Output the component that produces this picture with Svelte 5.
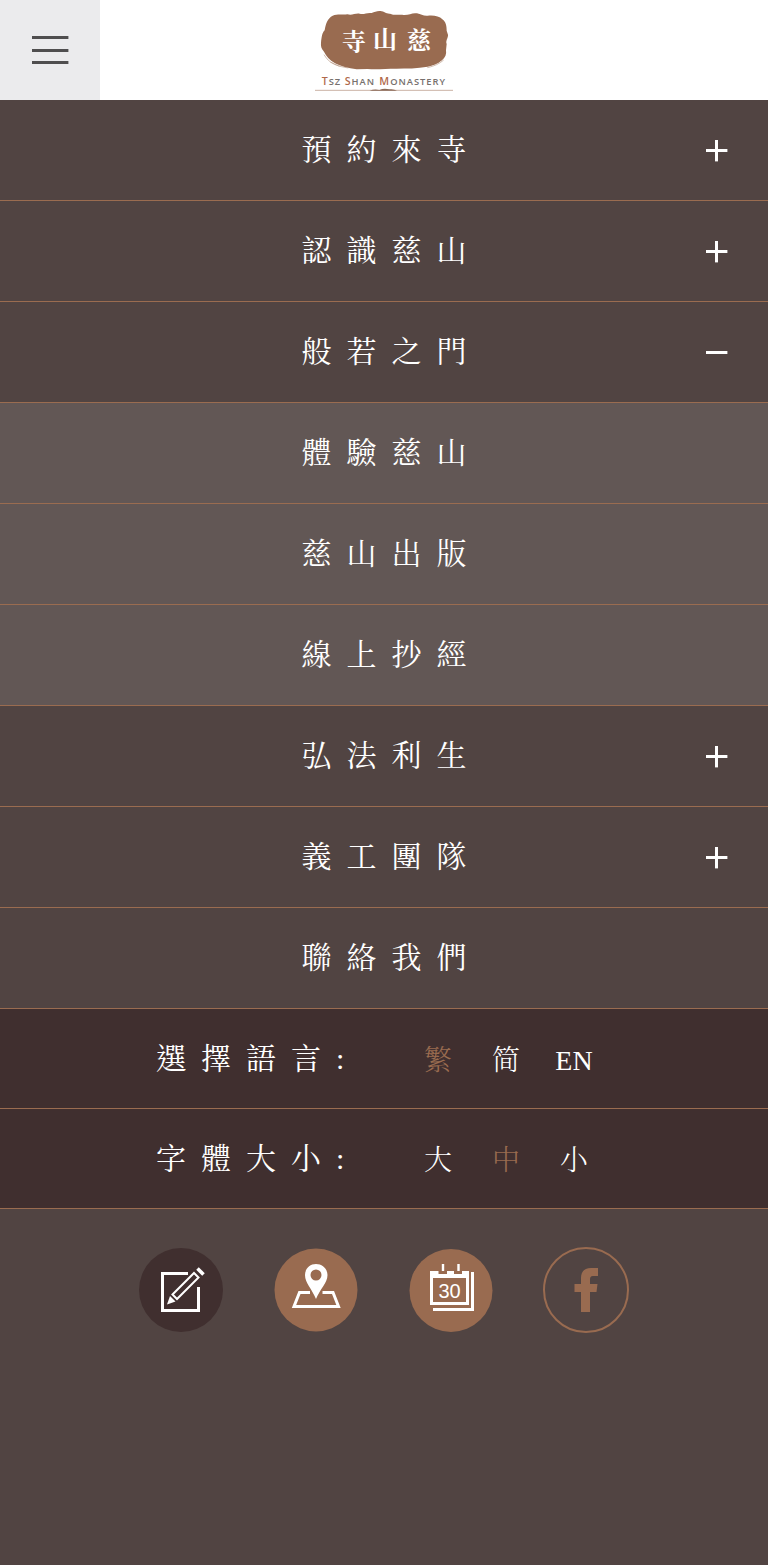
<script>
    let openId = $state("prajna");
    let lang = $state("tc");
    let size = $state("medium");

    const menu = [
        { id: "visit", title: "預約來寺", items: ["參觀預約"] },
        { id: "about", title: "認識慈山", items: ["慈山簡介"] },
        {
            id: "prajna",
            title: "般若之門",
            items: ["體驗慈山", "慈山出版", "線上抄經"],
        },
        { id: "dharma", title: "弘法利生", items: ["弘法活動"] },
        { id: "volunteer", title: "義工團隊", items: ["義工服務"] },
        { id: "contact", title: "聯絡我們", items: [] },
    ];

    const langs = [
        { id: "tc", text: "繁" },
        { id: "sc", text: "简" },
        { id: "en", text: "EN" },
    ];

    const sizes = [
        { id: "large", text: "大" },
        { id: "medium", text: "中" },
        { id: "small", text: "小" },
    ];

    function toggle(id) {
        openId = openId === id ? "" : id;
    }
</script>

<header class="top-bar">
    <button class="btn-menu" aria-label="Menu">
        <svg width="37" height="28" viewBox="0 0 37 28" aria-hidden="true">
            <path d="M0 1.5h36.4M0 14.5h36.4M0 26.5h36.4" stroke="#4f4e4f" stroke-width="3" />
        </svg>
    </button>
    <a class="logo" href="#home" aria-label="Tsz Shan Monastery">
        <svg width="138" height="84" viewBox="45 24 414 252">
            <path
                fill="#996b50"
                d="M63 128C65 112 66 98 74 91C77 72 83 54 98 47C112 41 128 45 142 43C157 47 165 39 179 41C193 44 200 37 215 39C224 36 231 32 241 33C254 34 258 42 270 41C285 48 298 42 311 45C327 46 337 37 351 40C363 43 370 48 383 47C401 45 418 48 427 58C438 66 440 79 440 92L444 104C445 114 436 121 440 132L438 151C440 162 436 173 426 181C413 192 398 197 383 200C351 206 320 205 289 206C258 206 232 209 203 207L170 208C143 205 123 199 105 190C88 180 79 168 72 155C64 146 62 138 63 128Z"
            />
            <path
                d="M72 164Q88 192 119 198M91 186Q115 202 145 204M382 203Q414 196 431 180"
                fill="none"
                stroke="#b99a87"
                stroke-width="2"
            />
            <g class="seal">
                <text x="125" y="150">寺</text>
                <text x="219" y="143">山</text>
                <text x="321" y="147">慈</text>
            </g>
            <g class="wordmark">
                <text x="65" y="255"><tspan class="cap">T</tspan>SZ</text>
                <text x="134" y="255"><tspan class="cap">S</tspan>HAN</text>
                <text x="238" y="255"><tspan class="cap">M</tspan>ONASTERY</text>
            </g>
            <path d="M45 271H459" stroke="#b08c78" stroke-width="2" />
            <path d="M209 272Q224 266 238 270Q252 263 268 268Q281 266 291 272Z" fill="#8a6a58" />
        </svg>
    </a>
</header>

<nav>
    <ul class="menu">
        {#each menu as section (section.id)}
            <li>
                <div class="row">
                    <a class="title" href="#{section.id}">{section.title}</a>
                    {#if section.items.length}
                        <button
                            class="btn-toggle"
                            aria-label={section.title}
                            aria-expanded={openId === section.id}
                            onclick={() => toggle(section.id)}
                        >
                            <svg width="22" height="24" viewBox="0 0 22 24" aria-hidden="true">
                                <path d="M0 12.5h21.4" />
                                {#if openId !== section.id}
                                    <path d="M10.5 2v21.4" />
                                {/if}
                            </svg>
                        </button>
                    {/if}
                </div>
                {#if section.items.length && openId === section.id}
                    <ul class="submenu">
                        {#each section.items as item}
                            <li class="row"><a class="title" href="#{section.id}">{item}</a></li>
                        {/each}
                    </ul>
                {/if}
            </li>
        {/each}
    </ul>
</nav>

<section class="setting">
    <span class="label">選擇語言:</span>
    {#each langs as option}
        <button class="option" class:active={lang === option.id} onclick={() => (lang = option.id)}>
            {option.text}
        </button>
    {/each}
</section>

<section class="setting">
    <span class="label">字體大小:</span>
    {#each sizes as option}
        <button class="option" class:active={size === option.id} onclick={() => (size = option.id)}>
            {option.text}
        </button>
    {/each}
</section>

<footer class="shortcuts">
    <a href="#register" aria-label="Register">
        <svg width="86" height="86" viewBox="0 0 86 86">
            <circle cx="43" cy="43" r="42" fill="#402f2f" />
            <path d="M50 26.5H24.5V63.5H60.5V40" fill="none" stroke="#fff" stroke-width="3" />
            <path d="M34.5 47.5L56 26L60.5 30.5L39 52Z" fill="none" stroke="#fff" stroke-width="2" />
            <path d="M59.5 21.5L65.5 27.5" stroke="#fff" stroke-width="3.6" />
            <path d="M32 49L37.5 54.5L29 57.5Z" fill="#fff" />
        </svg>
    </a>
    <a href="#map" aria-label="Map">
        <svg width="86" height="86" viewBox="0 0 86 86">
            <circle cx="43" cy="43" r="41.5" fill="#996b50" />
            <path d="M37 45.5H26.5L21 59.5H65.5L60 45.5H49.5" fill="none" stroke="#fff" stroke-width="3" />
            <path
                d="M43 17C36.5 17 32 22 32 28C32 36 39 42 43 52C47 42 54.5 36 54.5 28C54.5 22 49.5 17 43 17ZM43 22.5A5.5 5.5 0 1 1 43 33.5A5.5 5.5 0 1 1 43 22.5Z"
                fill="#fff"
                fill-rule="evenodd"
            />
        </svg>
    </a>
    <a href="#calendar" aria-label="Calendar">
        <svg width="86" height="86" viewBox="0 0 86 86">
            <circle cx="43" cy="43.5" r="41.5" fill="#996b50" />
            <path d="M35 17V24M50.5 17V24" stroke="#fff" stroke-width="2.4" />
            <path
                d="M22 24H30.5V27H39V24H46V27H54V24H61V58H22ZM25 31V55H58V31Z"
                fill="#fff"
                fill-rule="evenodd"
            />
            <path d="M64.5 25V62.5H25" fill="none" stroke="#fff" stroke-width="3" />
            <text class="day" x="41.5" y="51">30</text>
        </svg>
    </a>
    <a href="#facebook" aria-label="Facebook">
        <svg width="86" height="86" viewBox="0 0 86 86">
            <circle cx="43" cy="43" r="42" fill="none" stroke="#996b50" stroke-width="2" />
            <path
                d="M38 65V45H31.5V37H38V31C38 24 42 21 48 21H55V29H50C47.5 29 47 30.5 47 33V37H54.5L53.5 45H47V65Z"
                fill="#996b50"
            />
        </svg>
    </a>
</footer>

<style>
    :global(body) {
        background: #514442;
        color: #fff;
        font-family: "Liberation Serif", "Noto Serif CJK TC", "Noto Sans CJK TC", serif;
        font-weight: 300;
    }

    a {
        color: inherit;
        text-decoration: none;
    }

    button {
        background: none;
        border: 0;
        color: inherit;
        cursor: pointer;
        font: inherit;
        padding: 0;
    }

    svg {
        display: block;
    }

    ul {
        list-style: none;
        margin: 0;
        padding: 0;
    }

    .top-bar {
        background: #fff;
        display: grid;
        grid-template-columns: 100px 1fr 100px;
        height: 100px;
    }

    .btn-menu {
        align-items: center;
        background: #ebebed;
        display: flex;
        justify-content: center;
    }

    .logo {
        align-self: center;
        justify-self: center;
    }

    .seal {
        fill: #fff;
        font-family: "Noto Serif CJK TC", "Noto Sans CJK TC", serif;
        font-size: 72px;
        font-weight: 700;
    }

    .wordmark {
        fill: #77706d;
        font-family: "Open Sans", sans-serif;
        font-size: 28px;
        font-weight: 600;
        letter-spacing: 3px;
    }

    .cap {
        fill: #b0694a;
        font-size: 32px;
    }

    .row {
        align-items: center;
        border-bottom: 1px solid #9a6c50;
        display: grid;
        grid-template-columns: 102px 1fr 102px;
        height: 100px;
    }

    .submenu {
        background: #625755;
    }

    .title {
        font-size: 30px;
        font-weight: 400;
        grid-column: 2;
        letter-spacing: 15px;
        line-height: 44px;
        padding-left: 15px;
        text-align: center;
    }

    .btn-toggle {
        align-items: center;
        display: flex;
        height: 100%;
        justify-content: center;
    }

    .btn-toggle path {
        stroke: #fff;
        stroke-width: 3px;
    }

    .setting {
        align-items: center;
        background: #402f2f;
        border-bottom: 1px solid #9a6c50;
        display: grid;
        grid-template-columns: 248px 68px 68px 68px;
        height: 99px;
        justify-content: center;
        padding-right: 4px;
    }

    .label {
        font-size: 30px;
        font-weight: 400;
        letter-spacing: 15px;
        line-height: 44px;
    }

    .option {
        font-size: 28px;
        line-height: 44px;
        padding-top: 4px;
    }

    .active {
        color: #9a6c50;
    }

    .shortcuts {
        display: flex;
        gap: 49px;
        justify-content: center;
        padding: 38px 1px 38px 0;
    }

    .day {
        fill: #fff;
        font-family: "Liberation Sans", sans-serif;
        font-size: 20px;
        text-anchor: middle;
    }
</style>
